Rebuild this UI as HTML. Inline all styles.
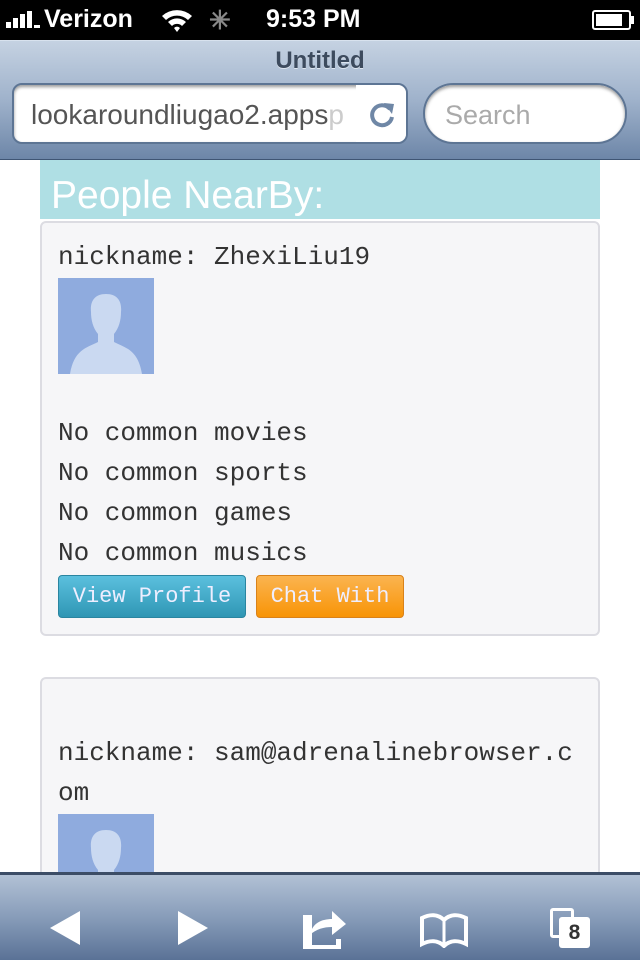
<!DOCTYPE html>
<html><head><meta charset="utf-8"><style>
*{margin:0;padding:0;box-sizing:border-box}
body{width:640px;height:960px;overflow:hidden;background:#fff;font-family:"Liberation Sans",sans-serif;position:relative}
.status{position:absolute;top:0;left:0;width:640px;height:40px;background:#000;color:#fff;font-weight:bold;font-size:25px}
.nav{position:absolute;top:40px;left:0;width:640px;height:120px;background:linear-gradient(#c5d2e2,#9fb2cb 50%,#6d86a8);border-top:1px solid #d8e2ee;border-bottom:1px solid #3f5574}
.mono{font-family:"Liberation Mono","Courier New",monospace;font-size:26px;color:#333}
.card{position:absolute;left:40px;width:560px;background:#f6f6f8;border:2px solid #dcdce2;border-radius:6px}
.av{position:absolute;width:96px;height:96px;background:#8fabde;overflow:hidden}
.btn{position:absolute;top:575px;height:43px;border-radius:4px;color:#eef;font-family:"Liberation Mono","Courier New",monospace;font-size:22px;text-align:center;line-height:42px}
.tb{position:absolute;top:872px;left:0;width:640px;height:88px;background:linear-gradient(#b2c1d5,#879cb9 50%,#5a7296);border-top:3px solid #3c4d66}
</style></head><body>
<div class="status">
 <div style="position:absolute;left:6px;top:22px;width:5px;height:6px;background:#fff"></div>
 <div style="position:absolute;left:13px;top:18px;width:5px;height:10px;background:#fff"></div>
 <div style="position:absolute;left:20px;top:14px;width:5px;height:14px;background:#fff"></div>
 <div style="position:absolute;left:27px;top:11px;width:5px;height:17px;background:#fff"></div>
 <div style="position:absolute;left:34px;top:25px;width:6px;height:3px;background:#fff"></div>
 <div style="position:absolute;left:44px;top:5px">Verizon</div>
 <svg style="position:absolute;left:160px;top:6px" width="34" height="26" viewBox="0 0 34 26"><path d="M2 10 A22 22 0 0 1 32 10 L28 14 A16 16 0 0 0 6 14Z M8 16 A13 13 0 0 1 26 16 L22 20 A7 7 0 0 0 12 20Z M14 22 L17 26 L20 22 A4 4 0 0 0 14 22Z" fill="#fff"/></svg>
 <div style="position:absolute;left:209px;top:5px;color:#888;font-size:26px">✳</div>
 <div style="position:absolute;left:266px;top:5px">9:53 PM</div>
 <div style="position:absolute;left:592px;top:10px;width:39px;height:20px;border:2px solid #fff;border-radius:3px"><div style="margin:2px;width:26px;height:12px;background:#fff"></div></div>
 <div style="position:absolute;left:631px;top:16px;width:3px;height:8px;background:#fff"></div>
</div>
<div class="nav">
 <div style="position:absolute;top:6px;width:640px;text-align:center;font-weight:bold;font-size:24px;color:#3d4b5e;text-shadow:0 1px 0 #dde5ef">Untitled</div>
 <div style="position:absolute;left:12px;top:42px;width:396px;height:61px;background:#fff;border:2px solid #5d7594;border-radius:10px;box-shadow:inset 0 2px 3px #999;overflow:hidden">
  <div style="position:absolute;left:17px;top:14px;font-size:28px;color:#555;white-space:nowrap">lookaroundliugao2.apps<span style="color:#ccc">p</span></div>
  <div style="position:absolute;right:0;top:0;width:50px;height:58px;background:#fff"></div>
  <svg style="position:absolute;left:354px;top:16px" width="28" height="28" viewBox="0 0 28 28"><path d="M22 8 A10 10 0 1 0 24 16" fill="none" stroke="#6f87a6" stroke-width="4"/><path d="M16 2 L26 3 L24 13Z" fill="#6f87a6"/></svg>
 </div>
 <div style="position:absolute;left:423px;top:42px;width:204px;height:61px;background:#fff;border:2px solid #5d7594;border-radius:31px;box-shadow:inset 0 2px 3px #999">
  <div style="position:absolute;left:20px;top:15px;font-size:27px;color:#aaa">Search</div>
 </div>
</div>
<div style="position:absolute;left:40px;top:160px;width:560px;height:59px;background:#afdfe4;color:#fff;font-size:39px;padding-left:11px;line-height:72px;white-space:nowrap;overflow:hidden">People NearBy:</div>
<div class="card" style="top:221px;height:415px"></div>
<div class="mono" style="position:absolute;left:58px;top:242px">nickname: ZhexiLiu19</div>
<div class="av" style="left:58px;top:278px"><svg width="96" height="96" viewBox="0 0 96 96"><path d="M48 16 C36 16 32 24 33 34 C33 42 35 50 40 56 L40 64 C28 70 16 72 12 96 L84 96 C80 72 68 70 56 64 L56 56 C61 50 63 42 63 34 C64 24 60 16 48 16Z" fill="#cad9f1"/></svg></div>
<div class="mono" style="position:absolute;left:58px;top:413px;line-height:40px">No common movies<br>No common sports<br>No common games<br>No common musics</div>
<div class="btn" style="left:58px;width:188px;background:linear-gradient(#5bc0de,#2f96b4);border:1px solid #2a85a0">View Profile</div>
<div class="btn" style="left:256px;width:148px;background:linear-gradient(#fbb450,#f89406);border:1px solid #d9821a">Chat With</div>
<div class="card" style="top:677px;height:220px"></div>
<div class="mono" style="position:absolute;left:58px;top:733px;line-height:40px">nickname: sam@adrenalinebrowser.c<br>om</div>
<div class="av" style="left:58px;top:814px"><svg width="96" height="96" viewBox="0 0 96 96"><path d="M48 16 C36 16 32 24 33 34 C33 42 35 50 40 56 L40 64 C28 70 16 72 12 96 L84 96 C80 72 68 70 56 64 L56 56 C61 50 63 42 63 34 C64 24 60 16 48 16Z" fill="#cad9f1"/></svg></div>
<div class="tb">
 <svg style="position:absolute;left:48px;top:34px" width="34" height="38"><path d="M32 2 L32 36 L2 19Z" fill="#fff"/></svg>
 <svg style="position:absolute;left:176px;top:34px" width="34" height="38"><path d="M2 2 L2 36 L32 19Z" fill="#fff"/></svg>
 <svg style="position:absolute;left:300px;top:30px" width="50" height="46"><path d="M3 10 H12 V40 H36 V34 H41 V44 H3Z" fill="#fff"/><path d="M10 30 C12 18 22 14 32 14 L32 6 L46 19 L32 30 L32 22 C24 22 16 24 10 30Z" fill="#fff"/></svg>
 <svg style="position:absolute;left:418px;top:37px" width="52" height="36"><path d="M4 6 C12 2 20 2 26 8 C32 2 40 2 48 6 V32 C40 28 32 28 26 34 C20 28 12 28 4 32Z" fill="none" stroke="#fff" stroke-width="4"/><path d="M26 8 V32" stroke="#fff" stroke-width="3"/></svg>
 <div style="position:absolute;left:550px;top:33px;width:24px;height:30px;border:3px solid #fff;border-radius:3px"></div>
 <div style="position:absolute;left:559px;top:42px;width:31px;height:31px;background:#fff;border-radius:3px;color:#333;font-weight:bold;font-size:21px;text-align:center;line-height:32px">8</div>
</div>
</body></html>
